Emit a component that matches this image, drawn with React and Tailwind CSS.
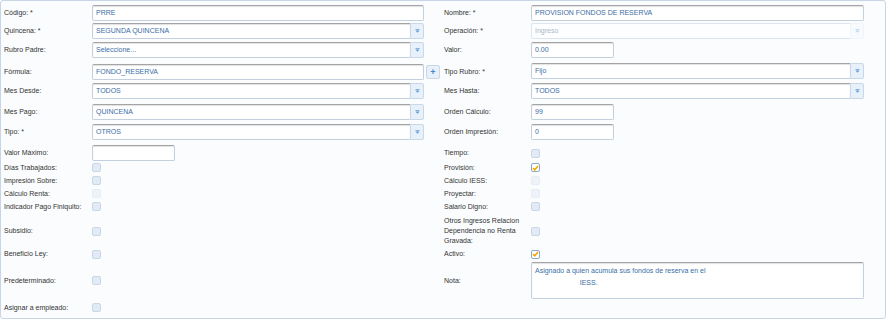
const font = { fontFamily: '"Liberation Sans", Arial, sans-serif' };

function Label({ children }) {
  return <div className="pr-1 text-[7px] leading-[10px] text-[#333]">{children}</div>;
}

function TextBox({ value, w = 'w-[332px]', h = 'h-[16px]' }) {
  return (
    <div className={`flex ${h} ${w} items-center rounded-[2px] border border-[#c3d1df] border-t-[#a4a4a4] bg-white pl-[3px] text-[7px] text-[#3a6ea5] shadow-[inset_0_1px_1px_rgba(0,0,0,0.12)]`}>
      {value}
    </div>
  );
}

function Caret() {
  return (
    <svg width="5" height="4" viewBox="0 0 5 4">
      <rect x="0.5" y="0" width="4" height="0.8" fill="#6aa0d6" />
      <path d="M0.5 1.5 H4.5 L2.5 3.8 Z" fill="#5b95d0" />
    </svg>
  );
}

function Select({ value, w = 'w-[332px]', disabled }) {
  return (
    <div className={`flex h-[16px] ${w}`}>
      <div
        className={
          disabled
            ? 'flex flex-1 items-center rounded-l-[2px] border border-r-0 border-[#dde6ef] bg-[#fdfeff] pl-[3px] text-[7px] text-[#a9b8c8]'
            : 'flex flex-1 items-center rounded-l-[2px] border border-r-0 border-[#c3d1df] border-t-[#a4a4a4] bg-white pl-[3px] text-[7px] text-[#3a6ea5] shadow-[inset_0_1px_1px_rgba(0,0,0,0.12)]'
        }
      >
        {value}
      </div>
      <div
        className={
          disabled
            ? 'flex w-[14px] items-center justify-center rounded-r-[2px] border border-[#e3ebf3] bg-[#f7fafd] opacity-40'
            : 'flex w-[14px] items-center justify-center rounded-r-[2px] border border-[#c9d8e8] bg-[#e8f0f9]'
        }
      >
        <Caret />
      </div>
    </div>
  );
}

function Check({ checked, disabled }) {
  if (checked) {
    return (
      <span className="flex h-[9px] w-[9px] items-center justify-center rounded-[2px] border border-[#8fa8c2] bg-white">
        <svg width="7" height="6" viewBox="0 0 7 6">
          <path d="M1 3.2 L2.8 4.8 L6 1" fill="none" stroke="#f2a800" strokeWidth="1.6" />
        </svg>
      </span>
    );
  }
  if (disabled) {
    return <span className="block h-[9px] w-[9px] rounded-[2px] border border-[#e6edf5] bg-[#eef3f9]" />;
  }
  return <span className="block h-[9px] w-[9px] rounded-[2px] border border-[#c9d7e6] bg-[#e2ebf5]" />;
}

function Row({ className, children }) {
  return <div className={`grid grid-cols-[88px_352px_87px_333px] items-center ${className}`}>{children}</div>;
}

export default function App() {
  return (
    <div style={font} className="h-[319px] w-[886px] bg-white">
      <div className="h-[319px] w-[886px] rounded-[3px] border border-[#c6d6e6] bg-[#fafcfe] pl-[3px]">
        <Row className="mt-[4px] h-[16px]">
          <Label>Código: *</Label>
          <TextBox value="PRRE" />
          <Label>Nombre: *</Label>
          <TextBox value="PROVISION FONDOS DE RESERVA" w="w-[333px]" />
        </Row>
        <Row className="mt-[2px] h-[16px]">
          <Label>Quincena: *</Label>
          <Select value="SEGUNDA QUINCENA" />
          <Label>Operación: *</Label>
          <Select value="Ingreso" w="w-[333px]" disabled />
        </Row>
        <Row className="mt-[3px] h-[16px]">
          <Label>Rubro Padre:</Label>
          <Select value="Seleccione..." />
          <Label>Valor:</Label>
          <TextBox value="0.00" w="w-[83px]" />
        </Row>
        <Row className="mt-[6px] h-[16px]">
          <Label>Fórmula:</Label>
          <div className="flex items-center">
            <TextBox value="FONDO_RESERVA" />
            <div className="ml-[2px] flex h-[14px] w-[14px] items-center justify-center rounded-[2px] border border-[#c9d8e8] bg-[#e8f0f9] text-[9px] font-bold leading-none text-[#4a86c5]">
              +
            </div>
          </div>
          <Label>Tipo Rubro: *</Label>
          <div className="-mt-[2px]">
            <Select value="Fijo" w="w-[333px]" />
          </div>
        </Row>
        <Row className="mt-[3px] h-[16px]">
          <Label>Mes Desde:</Label>
          <Select value="TODOS" />
          <Label>Mes Hasta:</Label>
          <Select value="TODOS" w="w-[333px]" />
        </Row>
        <Row className="mt-[5px] h-[16px]">
          <Label>Mes Pago:</Label>
          <Select value="QUINCENA" />
          <Label>Orden Cálculo:</Label>
          <TextBox value="99" w="w-[83px]" />
        </Row>
        <Row className="mt-[4px] h-[16px]">
          <Label>Tipo: *</Label>
          <Select value="OTROS" />
          <Label>Orden Impresión:</Label>
          <TextBox value="0" w="w-[83px]" />
        </Row>
        <Row className="mt-[5px] h-[16px]">
          <Label>Valor Máximo:</Label>
          <TextBox value="" w="w-[83px]" />
          <Label>Tiempo:</Label>
          <Check />
        </Row>
        <Row className="h-[13px]">
          <Label>Días Trabajados:</Label>
          <Check />
          <Label>Provisión:</Label>
          <Check checked />
        </Row>
        <Row className="h-[13px]">
          <Label>Impresión Sobre:</Label>
          <Check />
          <Label>Cálculo IESS:</Label>
          <Check disabled />
        </Row>
        <Row className="h-[13px]">
          <Label>Cálculo Renta:</Label>
          <Check disabled />
          <Label>Proyectar:</Label>
          <Check disabled />
        </Row>
        <Row className="h-[13px]">
          <Label>Indicador Pago Finiquito:</Label>
          <Check />
          <Label>Salario Digno:</Label>
          <Check />
        </Row>
        <Row className="h-[36px]">
          <Label>Subsidio:</Label>
          <Check />
          <Label>Otros Ingresos Relacion Dependencia no Renta Gravada:</Label>
          <Check />
        </Row>
        <Row className="h-[10px]">
          <Label>Beneficio Ley:</Label>
          <Check />
          <Label>Activo:</Label>
          <Check checked />
        </Row>
        <Row className="mt-[3px] h-[37px]">
          <Label>Predeterminado:</Label>
          <Check />
          <Label>Nota:</Label>
          <div className="h-[37px] w-[333px] whitespace-pre rounded-[2px] border border-[#c3d1df] border-t-[#a4a4a4] bg-white pl-[3px] pt-[2px] text-[7px] leading-[12px] text-[#3a6ea5] shadow-[inset_0_1px_1px_rgba(0,0,0,0.12)]">
            {'Asignado a quien acumula sus fondos de reserva en el\n                       IESS.'}
          </div>
        </Row>
        <Row className="mt-[3px] h-[11px]">
          <Label>Asignar a empleado:</Label>
          <Check />
        </Row>
      </div>
    </div>
  );
}
